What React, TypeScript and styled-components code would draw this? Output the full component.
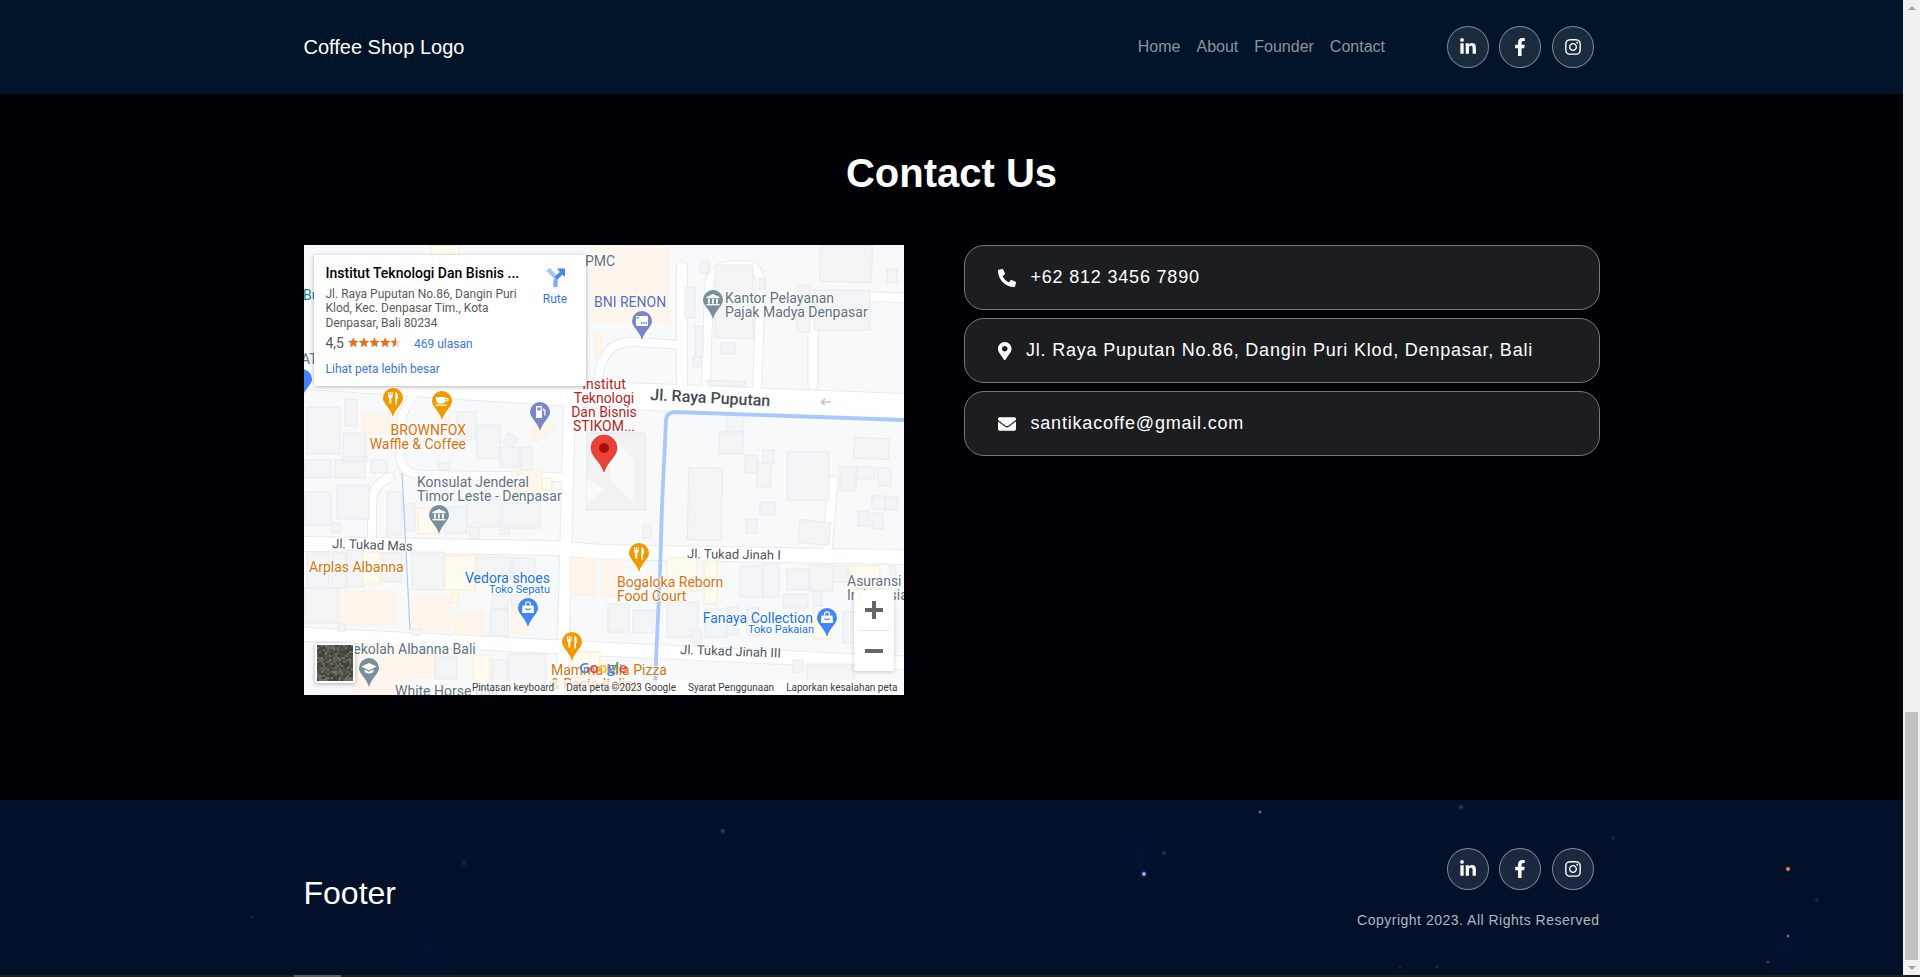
import React from 'react';
import styled, {createGlobalStyle} from 'styled-components';
import {
  FaEnvelope,
  FaFacebookF,
  FaInstagram,
  FaLinkedinIn,
  FaMapMarkerAlt,
  FaPhoneAlt
} from 'react-icons/fa';

const GlobalStyle = createGlobalStyle`
  html, body {
    margin: 0;
    padding: 0;
    height: 977px;
    overflow: hidden;
    background: #000;
    font-family: "Liberation Sans", Arial, sans-serif;
  }
`;

const Frame = styled.div`
  display: flex;
  flex-direction: column;
  width: 1920px;
  height: 977px;
  overflow: hidden;
`;

const Viewport = styled.div`
  display: flex;
  height: 975px;
`;

const Page = styled.div`
  display: flex;
  flex-direction: column;
  width: 1903px;
`;

const Container = styled.div`
  display: flex;
  width: 1296px;
  margin: 0 auto;
`;

const Header = styled.header`
  flex: none;
  height: 94px;
  display: flex;
  background: #021429;
`;

const HeaderInner = styled(Container)`
  align-items: center;
  justify-content: space-between;
`;

const Logo = styled.div`
  color: #fff;
  font-size: 20px;
`;

const HeaderRight = styled.div`
  display: flex;
  align-items: center;
`;

const Nav = styled.nav`
  display: flex;
  gap: 16px;
  margin-right: 62px;
`;

const NavLink = styled.a`
  color: rgba(255, 255, 255, 0.55);
  font-size: 16px;
`;

const Socials = styled.div`
  display: flex;
  gap: 10.25px;
  margin-right: 6px;
`;

const SocialButton = styled.a`
  width: 42px;
  height: 42px;
  box-sizing: border-box;
  display: flex;
  align-items: center;
  justify-content: center;
  border: 1px solid rgba(255, 255, 255, 0.45);
  border-radius: 50%;
  background: rgba(255, 255, 255, 0.1);
  color: #fff;
  font-size: 18px;
`;

const Main = styled.main`
  flex: none;
  height: 706px;
  box-sizing: border-box;
  padding-top: 55px;
  background: #000005;
`;

const Heading = styled.h2`
  margin: 0 0 48px;
  color: #fff;
  font-size: 40px;
  line-height: 48px;
  font-weight: 700;
  text-align: center;
`;

const MapFrame = styled.div`
  position: relative;
  flex: none;
  width: 600px;
  height: 450px;
  overflow: hidden;
  background: #f8f9fb;
  font-family: Roboto, Arial, sans-serif;
`;

const ContactList = styled.div`
  display: flex;
  flex-direction: column;
  gap: 8px;
  width: 636px;
  margin-left: 60px;
`;

const ContactRow = styled.div`
  height: 65px;
  box-sizing: border-box;
  display: flex;
  align-items: center;
  gap: 14.5px;
  padding-left: 33.5px;
  border: 1px solid #77787b;
  border-radius: 20px;
  background: #1c1d21;
  color: #fff;
  font-size: 18px;
  letter-spacing: 0.8px;

  svg {
    flex: none;
  }
`;

const PinIcon = styled(FaMapMarkerAlt)`
  width: 13.5px;
`;

const Footer = styled.footer`
  flex: none;
  height: 175px;
  box-sizing: border-box;
  padding-top: 48px;
  background-color: #03102a;
  background-repeat: no-repeat;
  background-image:
    radial-gradient(circle 3px at 1144px 74px, #fff 0, #6f8fff 40%, transparent 100%),
    radial-gradient(circle 3px at 1788px 69px, #ffe2c0 0, #c0602f 45%, transparent 100%),
    radial-gradient(circle 2px at 1788px 136px, #8793a8 0, transparent 100%),
    radial-gradient(circle 2px at 1260px 12px, #8e9ab0 0, transparent 100%),
    radial-gradient(circle 3px at 723px 31px, #3d4a5e 0, transparent 100%),
    radial-gradient(circle 3px at 1461px 7px, #3c4860 0, transparent 100%),
    radial-gradient(circle 2px at 1768px 162px, #4d586c 0, transparent 100%),
    radial-gradient(circle 3px at 1613px 38px, #232f47 0, transparent 100%),
    radial-gradient(circle 3px at 1164px 53px, #303c50 0, transparent 100%),
    radial-gradient(circle 3px at 1817px 100px, #2b2c45 0, transparent 100%),
    radial-gradient(circle 2px at 252px 117px, #2c2a40 0, transparent 100%),
    radial-gradient(circle 4px at 464px 63px, #1d2638 0, transparent 100%),
    radial-gradient(circle 2px at 1400px 167px, #2c3850 0, transparent 100%),
    radial-gradient(circle 2px at 1437px 167px, #2c3850 0, transparent 100%),
    radial-gradient(circle 28px at 1786px 145px, #041231 0, transparent 100%),
    radial-gradient(circle 30px at 1140px 55px, #041231 0, transparent 100%),
    radial-gradient(circle 34px at 425px 150px, #03122f 0, transparent 100%);
`;

const FooterInner = styled(Container)`
  justify-content: space-between;
`;

const FooterTitle = styled.div`
  color: #fff;
  font-size: 32px;
  line-height: 37px;
  margin-top: 27px;
`;

const FooterRight = styled.div`
  display: flex;
  flex-direction: column;
  align-items: flex-end;
  gap: 20px;
`;

const Copyright = styled.div`
  color: rgba(255, 255, 255, 0.7);
  font-size: 14px;
  line-height: 21px;
  letter-spacing: 0.5px;
`;

const ScrollTrack = styled.div`
  flex: none;
  width: 17px;
  height: 975px;
  display: flex;
  flex-direction: column;
  align-items: center;
  background: #f1f1f1;
`;

const ScrollArrow = styled.div<{$up?: boolean}>`
  flex: none;
  width: 0;
  height: 0;
  margin: ${p => (p.$up ? '6px 0 auto' : '6px 0 5px')};
  border-left: 4px solid transparent;
  border-right: 4px solid transparent;
  ${p => (p.$up ? 'border-bottom: 4px solid #a3a3a3;' : 'border-top: 4px solid #a3a3a3;')}
`;

const ScrollThumb = styled.div`
  flex: none;
  width: 13px;
  height: 248px;
  background: #c1c1c1;
`;

const BottomStrip = styled.div`
  height: 2px;
  background: #1f1f1f;
`;

const BottomThumb = styled.div`
  width: 47px;
  height: 2px;
  margin-left: 294px;
  background: #5c5c5c;
`;

const MapCanvas = styled.svg`
  display: block;
`;

const MapLabel = styled.text<{$color: string; $size?: number; $weight?: number}>`
  fill: ${p => p.$color};
  font-family: Roboto, Arial, sans-serif;
  font-size: ${p => p.$size ?? 14}px;
  font-weight: ${p => p.$weight ?? 400};
  paint-order: stroke;
  stroke: rgba(255, 255, 255, 0.85);
  stroke-width: 2px;
  stroke-linejoin: round;
`;

const GoogleMark = styled.text`
  font-family: "Open Sans", Roboto, Arial, sans-serif;
  font-size: 15px;
  font-weight: 600;
  letter-spacing: -0.4px;
`;

const InfoCard = styled.div`
  position: absolute;
  left: 10px;
  top: 10px;
  width: 272px;
  height: 131px;
  box-sizing: border-box;
  display: flex;
  justify-content: space-between;
  padding: 9px 12px 0;
  background: #fff;
  border-radius: 2px;
  box-shadow: 0 1px 4px rgba(0, 0, 0, 0.3);
`;

const InfoBody = styled.div`
  width: 200px;
`;

const InfoTitle = styled.div`
  color: #000;
  font-size: 14px;
  line-height: 18px;
  font-weight: 500;
  white-space: nowrap;
`;

const InfoAddress = styled.div`
  margin-top: 5px;
  color: #5b5b5b;
  font-size: 12px;
  line-height: 14.3px;
  width: 194px;
`;

const RatingRow = styled.div`
  display: flex;
  align-items: center;
  margin-top: 4px;
  height: 18px;
`;

const RatingValue = styled.span`
  color: #5b5b5b;
  font-size: 14px;
  margin-right: 4px;
`;

const ReviewLink = styled.a`
  margin-left: 13px;
  color: #3b74e6;
  font-size: 12px;
  position: relative;
  top: 1px;
`;

const LargerMapLink = styled.a`
  display: block;
  margin-top: 9px;
  color: #3b74e6;
  font-size: 12px;
  line-height: 16px;
`;

const DirectionsLink = styled.a`
  display: flex;
  flex-direction: column;
  align-items: center;
  gap: 5px;
  width: 30px;
  margin: 4px 3.5px 0 0;
  color: #3b74e6;
  font-size: 12px;
`;

const ZoomControl = styled.div`
  position: absolute;
  left: 550px;
  top: 345px;
  width: 40px;
  height: 81px;
  display: flex;
  flex-direction: column;
  background: #fff;
  border-radius: 2px;
  box-shadow: 0 1px 4px rgba(0, 0, 0, 0.2);
`;

const ZoomButton = styled.div`
  flex: 1;
  display: flex;
  align-items: center;
  justify-content: center;
`;

const ZoomDivider = styled.div`
  height: 1px;
  margin: 0 5px;
  background: #e6e6e6;
`;

const SatelliteThumb = styled.div`
  position: absolute;
  left: 11px;
  top: 398px;
  width: 40px;
  height: 40px;
  box-sizing: border-box;
  border: 2px solid #fff;
  border-radius: 2px;
  box-shadow: 0 1px 4px rgba(0, 0, 0, 0.3);
  overflow: hidden;
`;

const Attribution = styled.div`
  position: absolute;
  right: 0;
  bottom: 0;
  width: 432px;
  height: 15px;
  box-sizing: border-box;
  display: flex;
  align-items: center;
  justify-content: flex-end;
  gap: 12px;
  padding-right: 6px;
  background: rgba(255, 255, 255, 0.7);
  color: #3c4043;
  font-size: 10px;
  white-space: nowrap;
`;

type BlockKind = 'g' | 'o' | 'y';
type Block = [number, number, number, number, BlockKind, number?];

const blockStyle: Record<BlockKind, {fill: string; stroke: string}> = {
  g: {fill: '#f3f4f6', stroke: '#e8eaed'},
  o: {fill: '#fef6ec', stroke: '#fcefdf'},
  y: {fill: '#fffbf0', stroke: '#fdebc4'}
};

const blocks: Block[] = [
  [288, 0, 76, 77, 'o'],
  [127, 0, 28, 10, 'y'],
  [291, 88, 6, 25, 'o'],
  [516, 0, 52, 37, 'g', 1],
  [583, 24, 10, 13, 'g', 3],
  [381, 42, 10, 31, 'g'],
  [396, 17, 9, 11, 'g'],
  [455, 33, 6, 12, 'g'],
  [411, 20, 38, 73, 'g'],
  [417, 98, 14, 11, 'g'],
  [391, 81, 8, 31, 'g'],
  [389, 112, 8, 10, 'g'],
  [403, 136, 38, 5, 'g', 2],
  [493, 40, 13, 47, 'g'],
  [510, 45, 56, 40, 'g'],
  [422, 170, 17, 17, 'g'],
  [415, 187, 24, 22, 'g'],
  [459, 205, 11, 14, 'g'],
  [550, 193, 35, 21, 'g', 2],
  [483, 207, 42, 48, 'g'],
  [453, 218, 14, 24, 'g', 3],
  [441, 210, 12, 18, 'g', 3],
  [384, 223, 34, 72, 'g', 1],
  [456, 257, 15, 13, 'g'],
  [442, 274, 11, 14, 'g'],
  [495, 276, 31, 23, 'g', 6],
  [536, 222, 16, 24, 'g'],
  [553, 222, 18, 12, 'g'],
  [574, 223, 13, 18, 'g'],
  [568, 251, 13, 13, 'g'],
  [581, 252, 13, 13, 'g'],
  [554, 266, 11, 15, 'g'],
  [568, 268, 11, 16, 'g'],
  [339, 281, 8, 12, 'g'],
  [298, 314, 20, 37, 'o'],
  [363, 313, 30, 33, 'y'],
  [400, 316, 13, 43, 'y'],
  [436, 321, 23, 31, 'g'],
  [459, 319, 16, 33, 'g'],
  [483, 324, 22, 21, 'g'],
  [479, 349, 25, 14, 'g'],
  [506, 320, 23, 26, 'g'],
  [509, 346, 9, 15, 'g'],
  [529, 321, 15, 16, 'g'],
  [545, 321, 31, 22, 'y'],
  [586, 321, 6, 9, 'g'],
  [304, 359, 21, 28, 'g'],
  [329, 365, 25, 23, 'g'],
  [363, 357, 31, 35, 'g'],
  [388, 385, 10, 13, 'g'],
  [401, 364, 22, 28, 'g'],
  [423, 362, 11, 28, 'g'],
  [443, 363, 12, 28, 'g'],
  [539, 367, 12, 31, 'g'],
  [509, 367, 18, 27, 'y'],
  [503, 419, 47, 23, 'g'],
  [489, 415, 10, 12, 'g'],
  [33, 240, 32, 34, 'g'],
  [1, 247, 26, 33, 'g'],
  [28, 278, 8, 10, 'g'],
  [83, 247, 15, 43, 'g'],
  [101, 259, 10, 27, 'g'],
  [114, 263, 22, 26, 'y'],
  [141, 262, 22, 26, 'g'],
  [166, 282, 9, 12, 'g'],
  [163, 253, 33, 29, 'g'],
  [198, 258, 38, 25, 'g'],
  [196, 284, 10, 5, 'g', -10],
  [213, 224, 25, 23, 'o'],
  [238, 233, 10, 12, 'y'],
  [1, 215, 26, 18, 'g'],
  [31, 215, 30, 18, 'g'],
  [67, 215, 16, 13, 'g'],
  [134, 218, 12, 7, 'g'],
  [108, 307, 32, 38, 'g'],
  [141, 311, 30, 34, 'y'],
  [173, 312, 33, 23, 'g'],
  [208, 313, 23, 20, 'g'],
  [188, 350, 16, 14, 'g'],
  [207, 350, 19, 10, 'g'],
  [186, 365, 18, 26, 'g'],
  [208, 363, 15, 25, 'o'],
  [3, 307, 22, 37, 'g'],
  [28, 308, 14, 35, 'g'],
  [43, 305, 17, 37, 'g'],
  [59, 307, 17, 32, 'y'],
  [78, 308, 20, 29, 'g'],
  [0, 343, 34, 35, 'g'],
  [36, 346, 55, 34, 'o'],
  [108, 352, 38, 33, 'o'],
  [148, 348, 6, 10, 'y'],
  [150, 368, 29, 22, 'o'],
  [34, 378, 7, 8, 'g'],
  [108, 384, 9, 6, 'g'],
  [266, 313, 25, 37, 'o'],
  [50, 400, 55, 50, 'o'],
  [108, 410, 23, 22, 'o'],
  [131, 412, 22, 22, 'g'],
  [169, 410, 17, 28, 'y'],
  [188, 415, 15, 22, 'g'],
  [204, 409, 38, 27, 'g'],
  [268, 407, 28, 25, 'y'],
  [41, 154, 12, 27, 'g'],
  [3, 162, 33, 47, 'g'],
  [39, 188, 23, 29, 'g'],
  [59, 168, 27, 20, 'o'],
  [153, 167, 19, 28, 'g'],
  [173, 180, 23, 33, 'g'],
  [196, 202, 20, 20, 'g'],
  [217, 202, 11, 23, 'g'],
  [201, 190, 11, 11, 'g', 30],
  [133, 172, 12, 17, 'o'],
  [38, 212, 25, 3, 'g'],
  [226, 177, 22, 14, 'o', -40]
];

// road paths with their widths, drawn twice: grey casing, then white
const roads: [string, number][] = [
  ['M-10 130 L296 150 L600 162', 26],
  ['M-5 299 L250 303 L296 307 L600 312', 14],
  ['M-5 389 L296 404 L600 418', 13],
  ['M266 140 L258 450', 11],
  ['M378 22 L378 145', 10],
  ['M378 100 L330 97 Q298 95 294 135', 8],
  ['M402 140 L405 40 Q408 20 430 20 L440 20 Q456 20 457 40 L453 145', 8],
  ['M509 140 L509 50 L610 53', 9],
  ['M529 236 L523 305', 9],
  ['M86 232 Q68 240 68 258 L68 296', 8],
  ['M110 148 L98 170 L96 212 Q98 229 118 230 L262 232', 8]
];

const rivers: [string, number][] = [
  ['M600 175 L372 167 Q362 167 362 176 L358 260 L356 330 L352 415 L351 450', 3.8],
  ['M98 228 L106 385', 1.2]
];

const labelGrey = '#5f7285';
const labelOrange = '#d9730d';
const labelBlue = '#1a73e8';
const labelRed = '#b3261e';
const roadText = '#50555c';

type Label = {
  x: number;
  y: number;
  text: string;
  color: string;
  size?: number;
  weight?: number;
  anchor?: 'start' | 'middle' | 'end';
  rotate?: number;
};

const labels: Label[] = [
  {x: 281, y: 21, text: 'PMC', color: labelGrey},
  {x: -1, y: 55, text: 'Bu', color: '#12848c'},
  {x: -3, y: 119, text: 'AT', color: labelGrey},
  {x: 421, y: 58, text: 'Kantor Pelayanan', color: labelGrey},
  {x: 421, y: 72, text: 'Pajak Madya Denpasar', color: labelGrey},
  {x: 290, y: 62, text: 'BNI RENON', color: '#5c6bc0'},
  {x: 162, y: 190, text: 'BROWNFOX', color: labelOrange, anchor: 'end'},
  {x: 162, y: 204, text: 'Waffle & Coffee', color: labelOrange, anchor: 'end'},
  {x: 300, y: 144, text: 'Institut', color: labelRed, anchor: 'middle'},
  {x: 300, y: 158, text: 'Teknologi', color: labelRed, anchor: 'middle'},
  {x: 300, y: 172, text: 'Dan Bisnis', color: labelRed, anchor: 'middle'},
  {x: 300, y: 186, text: 'STIKOM...', color: labelRed, anchor: 'middle'},
  {x: 346, y: 155, text: 'Jl. Raya Puputan', color: '#444b55', size: 16, weight: 500, rotate: 3},
  {x: 113, y: 242, text: 'Konsulat Jenderal', color: labelGrey},
  {x: 113, y: 256, text: 'Timor Leste - Denpasar', color: labelGrey},
  {x: 28, y: 303, text: 'Jl. Tukad Mas', color: roadText, size: 13, rotate: 2},
  {x: 5, y: 327, text: 'Arplas Albanna', color: labelOrange},
  {x: 246, y: 338, text: 'Vedora shoes', color: labelBlue, anchor: 'end'},
  {x: 246, y: 348, text: 'Toko Sepatu', color: labelBlue, size: 11, anchor: 'end'},
  {x: 247, y: 430, text: 'Mamma Mia Pizza', color: labelOrange},
  {x: 247, y: 444, text: '& Pasta Italian', color: labelOrange},
  {x: 313, y: 342, text: 'Bogaloka Reborn', color: labelOrange},
  {x: 313, y: 356, text: 'Food Court', color: labelOrange},
  {x: 383, y: 313, text: 'Jl. Tukad Jinah I', color: roadText, size: 13, rotate: 1},
  {x: 376, y: 409, text: 'Jl. Tukad Jinah III', color: roadText, size: 13, rotate: 2},
  {x: 543, y: 341, text: 'Asuransi', color: labelGrey},
  {x: 543, y: 355, text: 'Indonesia', color: labelGrey},
  {x: 509, y: 378, text: 'Fanaya Collection', color: labelBlue, anchor: 'end'},
  {x: 510, y: 388, text: 'Toko Pakaian', color: labelBlue, size: 11, anchor: 'end'},
  {x: 41, y: 409, text: 'Sekolah Albanna Bali', color: labelGrey},
  {x: 91, y: 451, text: 'White Horse Bali', color: labelGrey}
];

type PinKind = 'food' | 'cafe' | 'fuel' | 'bank' | 'gov' | 'shop' | 'school' | 'none';
type PinData = {x: number; y: number; color: string; kind: PinKind};

const pins: PinData[] = [
  {x: 409, y: 55, color: '#78909c', kind: 'gov'},
  {x: 338, y: 76, color: '#7986cb', kind: 'bank'},
  {x: -2, y: 134, color: '#4285f4', kind: 'none'},
  {x: 89, y: 153, color: '#f29900', kind: 'food'},
  {x: 138, y: 156, color: '#f29900', kind: 'cafe'},
  {x: 236, y: 167, color: '#7986cb', kind: 'fuel'},
  {x: 135, y: 270, color: '#78909c', kind: 'gov'},
  {x: 224, y: 363, color: '#4285f4', kind: 'shop'},
  {x: 335, y: 308, color: '#f29900', kind: 'food'},
  {x: 268, y: 397, color: '#f29900', kind: 'food'},
  {x: 523, y: 373, color: '#4285f4', kind: 'shop'},
  {x: 65, y: 423, color: '#78909c', kind: 'school'}
];

const PinGlyph = ({kind}: {kind: PinKind}) => {
  switch (kind) {
    case 'food':
      return (
        <g fill="#fff">
          <path d="M-5 -6h1v3h.8v-3h1v3h.8v-3h1v4.5q0 1.3-1.3 1.5v5.5h-2v-5.5q-1.3-.2-1.3-1.5z" />
          <path d="M2.4 -6q2.6 .6 2.6 5v2h-1v5.5h-1.6z" />
        </g>
      );
    case 'cafe':
      return (
        <g fill="#fff">
          <path d="M-6 -4h9.5v1h1.6q1.6 0 1.6 1.7t-1.6 1.7h-1.9q-.9 2.2-3.2 2.2h-2.5q-3 0-3.5-3.4zM3.5 -2v1.4h1.2q.6 0 .6-.7t-.6-.7z" />
          <rect x="-6.5" y="3.6" width="11" height="1.2" />
        </g>
      );
    case 'fuel':
      return (
        <g fill="#fff">
          <path d="M-4 -6h6v12h-6z" />
          <rect x="-2.6" y="-4.6" width="3.2" height="3" fill="#7986cb" />
          <path d="M3 -4l2.5 2v5.5h-1.3v-4l-1.2-1z" />
        </g>
      );
    case 'bank':
      return (
        <g>
          <rect x="-6" y="-5" width="12" height="10" rx="1" fill="#fff" />
          <circle cx="-4" cy="-3.2" r="1" fill="#7986cb" />
          <path d="M-1 2h6" stroke="#7986cb" strokeWidth="2" strokeDasharray="1 .6" />
        </g>
      );
    case 'gov':
      return (
        <g fill="#fff">
          <path d="M0 -6l6.5 3v1.2h-13v-1.2z" />
          <rect x="-5" y="-1" width="1.8" height="4.6" />
          <rect x="-1" y="-1" width="1.8" height="4.6" />
          <rect x="3" y="-1" width="1.8" height="4.6" />
          <rect x="-6.5" y="4" width="13" height="1.4" />
        </g>
      );
    case 'shop':
      return (
        <g>
          <path d="M-5.5 -2.5h11l.5 7.5h-12z" fill="#fff" />
          <path d="M-2.4 -2.5v-1.2a2.4 2.4 0 0 1 4.8 0v1.2" fill="none" stroke="#fff" strokeWidth="1.2" />
          <path d="M-2.5 0.5q2.5 2.6 5 0" fill="none" stroke="#4285f4" strokeWidth="1.1" />
        </g>
      );
    case 'school':
      return (
        <g fill="#fff">
          <path d="M0 -5l7.5 3.6-7.5 3.6-7.5-3.6z" />
          <path d="M-4.4 1.6l4.4 2.1 4.4-2.1v2.4q-4.4 3-8.8 0z" />
        </g>
      );
    default:
      return null;
  }
};

const MapPin = ({x, y, color, kind}: PinData) => (
  <g transform={`translate(${x} ${y})`}>
    <path d="M-10 0A10 10 0 1 1 10 0C10 6 3 9 0 19C-3 9 -10 6 -10 0Z" fill={color} />
    <PinGlyph kind={kind} />
  </g>
);

// seeded speckle for the satellite thumbnail
const satelliteCells = (() => {
  const tones = ['#4a4842', '#5a554e', '#46493f', '#6b665e', '#3d3f38', '#75706a', '#4f5547'];
  const cells: {x: number; y: number; fill: string}[] = [];
  let seed = 17;
  for (let y = 0; y < 36; y += 2) {
    for (let x = 0; x < 36; x += 2) {
      seed = (seed * 137 + 71) % 1009;
      cells.push({x, y, fill: tones[seed % tones.length]});
    }
  }
  return cells;
})();

const RatingStars = () => (
  <svg width="53" height="11" viewBox="0 0 53 11">
    <defs>
      <linearGradient id="half-star">
        <stop offset="50%" stopColor="#e7711b" />
        <stop offset="50%" stopColor="#d8d8d8" />
      </linearGradient>
    </defs>
    {[0, 1, 2, 3, 4].map(i => (
      <path
        key={i}
        transform={`translate(${i * 10.6} 0)`}
        d="M5.3 .3l1.5 3.5 3.8 .3-2.9 2.5 .9 3.7-3.3-2-3.3 2 .9-3.7-2.9-2.5 3.8-.3z"
        fill={i === 4 ? 'url(#half-star)' : '#e7711b'}
      />
    ))}
  </svg>
);

const DirectionsIcon = () => (
  <svg width="19" height="19" viewBox="0 0 19 19">
    <path d="M0 2.5L4 0L11.5 8V19H7.5V10Z" fill="#a6c5fa" />
    <path d="M7.5 19V13L11.5 9V19Z" fill="#7baaf7" />
    <path d="M19 0.5V9L16.4 6.6L11.5 11.5L8.5 9L13.8 4L11 0.5Z" fill="#4285f4" />
  </svg>
);

const GoogleMap = () => (
  <MapFrame>
    <MapCanvas width="600" height="450" viewBox="0 0 600 450">
      {roads.map(([d, w]) => (
        <path key={d} d={d} fill="none" stroke="#e8eaed" strokeWidth={w + 2} strokeLinecap="round" />
      ))}
      {roads.map(([d, w]) => (
        <path key={d} d={d} fill="none" stroke="#fff" strokeWidth={w} strokeLinecap="round" />
      ))}
      {blocks.map(([x, y, w, h, kind, rot], i) => (
        <rect
          key={i}
          x={x}
          y={y}
          width={w}
          height={h}
          fill={blockStyle[kind].fill}
          stroke={blockStyle[kind].stroke}
          transform={rot ? `rotate(${rot} ${x + w / 2} ${y + h / 2})` : undefined}
        />
      ))}
      {rivers.map(([d, w]) => (
        <path key={d} d={d} fill="none" stroke="#a9c9fb" strokeWidth={w} />
      ))}
      <path d="M283 188H341V265H283Z" fill="#f1f2f3" stroke="#e3e5e8" />
      <path d="M283 233L300 245L283 258ZM306 190L330 215V258L306 235Z" fill="#f9f9f9" />
      {pins.map(pin => (
        <MapPin key={`${pin.x}-${pin.y}`} {...pin} />
      ))}
      {labels.map(l => (
        <MapLabel
          key={l.text}
          x={l.x}
          y={l.y}
          $color={l.color}
          $size={l.size}
          $weight={l.weight}
          textAnchor={l.anchor ?? 'start'}
          transform={l.rotate ? `rotate(${l.rotate} ${l.x} ${l.y})` : undefined}
        >
          {l.text}
        </MapLabel>
      ))}
      <path d="M517 157h10M517 157l4-3M517 157l4 3" stroke="#c5c8cc" strokeWidth="1.6" fill="none" />
      <path d="M287 203A13 13 0 1 1 313 203C313 212 304 215 300 227C296 215 287 212 287 203Z" fill="#ea4335" stroke="#c5221f" strokeWidth=".5" />
      <circle cx="300" cy="203" r="5" fill="#a50e0e" />
      <GoogleMark x="275" y="428">
        <tspan fill="#4285f4">G</tspan>
        <tspan fill="#ea4335">o</tspan>
        <tspan fill="#fbbc05">o</tspan>
        <tspan fill="#4285f4">g</tspan>
        <tspan fill="#34a853">l</tspan>
        <tspan fill="#ea4335">e</tspan>
      </GoogleMark>
    </MapCanvas>
    <InfoCard>
      <InfoBody>
        <InfoTitle>Institut Teknologi Dan Bisnis ...</InfoTitle>
        <InfoAddress>Jl. Raya Puputan No.86, Dangin Puri Klod, Kec. Denpasar Tim., Kota Denpasar, Bali 80234</InfoAddress>
        <RatingRow>
          <RatingValue>4,5</RatingValue>
          <RatingStars />
          <ReviewLink>469 ulasan</ReviewLink>
        </RatingRow>
        <LargerMapLink>Lihat peta lebih besar</LargerMapLink>
      </InfoBody>
      <DirectionsLink>
        <DirectionsIcon />
        Rute
      </DirectionsLink>
    </InfoCard>
    <ZoomControl>
      <ZoomButton>
        <svg width="18" height="18" viewBox="0 0 18 18">
          <path d="M7 0h4v7h7v4h-7v7H7v-7H0V7h7z" fill="#666" />
        </svg>
      </ZoomButton>
      <ZoomDivider />
      <ZoomButton>
        <svg width="18" height="4" viewBox="0 0 18 4">
          <rect width="18" height="4" fill="#666" />
        </svg>
      </ZoomButton>
    </ZoomControl>
    <SatelliteThumb>
      <svg width="36" height="36" viewBox="0 0 36 36">
        {satelliteCells.map(c => (
          <rect key={`${c.x}-${c.y}`} x={c.x} y={c.y} width="2" height="2" fill={c.fill} />
        ))}
      </svg>
    </SatelliteThumb>
    <Attribution>
      <span>Pintasan keyboard</span>
      <span>Data peta ©2023 Google</span>
      <span>Syarat Penggunaan</span>
      <span>Laporkan kesalahan peta</span>
    </Attribution>
  </MapFrame>
);

const SocialLinks = () => (
  <Socials>
    <SocialButton>
      <FaLinkedinIn />
    </SocialButton>
    <SocialButton>
      <FaFacebookF />
    </SocialButton>
    <SocialButton>
      <FaInstagram />
    </SocialButton>
  </Socials>
);

const App = () => (
  <Frame>
    <GlobalStyle />
    <Viewport>
      <Page>
        <Header>
          <HeaderInner>
            <Logo>Coffee Shop Logo</Logo>
            <HeaderRight>
              <Nav>
                <NavLink>Home</NavLink>
                <NavLink>About</NavLink>
                <NavLink>Founder</NavLink>
                <NavLink>Contact</NavLink>
              </Nav>
              <SocialLinks />
            </HeaderRight>
          </HeaderInner>
        </Header>
        <Main>
          <Heading>Contact Us</Heading>
          <Container>
            <GoogleMap />
            <ContactList>
              <ContactRow>
                <FaPhoneAlt />
                +62 812 3456 7890
              </ContactRow>
              <ContactRow>
                <PinIcon />
                Jl. Raya Puputan No.86, Dangin Puri Klod, Denpasar, Bali
              </ContactRow>
              <ContactRow>
                <FaEnvelope />
                santikacoffe@gmail.com
              </ContactRow>
            </ContactList>
          </Container>
        </Main>
        <Footer>
          <FooterInner>
            <FooterTitle>Footer</FooterTitle>
            <FooterRight>
              <SocialLinks />
              <Copyright>Copyright 2023. All Rights Reserved</Copyright>
            </FooterRight>
          </FooterInner>
        </Footer>
      </Page>
      <ScrollTrack>
        <ScrollArrow $up />
        <ScrollThumb />
        <ScrollArrow />
      </ScrollTrack>
    </Viewport>
    <BottomStrip>
      <BottomThumb />
    </BottomStrip>
  </Frame>
);

export default App;
